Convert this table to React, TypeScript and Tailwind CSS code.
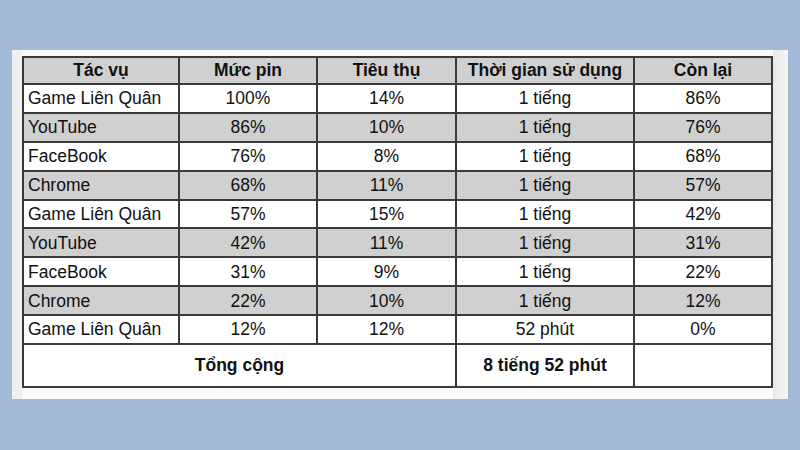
import React from "react";

const rows: string[][] = [
  ["Game Liên Quân", "100%", "14%", "1 tiếng", "86%"],
  ["YouTube", "86%", "10%", "1 tiếng", "76%"],
  ["FaceBook", "76%", "8%", "1 tiếng", "68%"],
  ["Chrome", "68%", "11%", "1 tiếng", "57%"],
  ["Game Liên Quân", "57%", "15%", "1 tiếng", "42%"],
  ["YouTube", "42%", "11%", "1 tiếng", "31%"],
  ["FaceBook", "31%", "9%", "1 tiếng", "22%"],
  ["Chrome", "22%", "10%", "1 tiếng", "12%"],
  ["Game Liên Quân", "12%", "12%", "52 phút", "0%"],
];

const headers = ["Tác vụ", "Mức pin", "Tiêu thụ", "Thời gian sử dụng", "Còn lại"];

export default function App() {
  return (
    <div
      className="w-[800px] h-[450px] bg-[#a3bbd8] pt-[50px] pl-[12px]"
      style={{ fontFamily: '"Liberation Sans", Arial, sans-serif' }}
    >
      <div className="w-[776px] h-[349px] bg-[#fbfbfb] flex">
        <div className="w-[10px] h-full bg-[#f0f0f0]" />
        <div className="w-[751px] pt-[6px]">
          <div className="grid grid-cols-[154px_136px_137px_176px_136px] grid-rows-[25px_repeat(9,26.9px)_41px] gap-[2px] p-[2px] bg-[#3a3a3a] text-[17.5px] text-[#111]">
            {headers.map((h) => (
              <div key={h} className="bg-[#d0d0d0] flex items-center justify-center font-bold">
                {h}
              </div>
            ))}
            {rows.map((r, i) =>
              r.map((c, j) => (
                <div
                  key={i + "-" + j}
                  className={
                    (i % 2 === 1 ? "bg-[#d0d0d0] " : "bg-white ") +
                    (j === 0 ? "flex items-center justify-start pl-[4px]" : "flex items-center justify-center")
                  }
                >
                  {c}
                </div>
              ))
            )}
            <div className="col-span-3 bg-white flex items-center justify-center font-bold">Tổng cộng</div>
            <div className="bg-white flex items-center justify-center font-bold">8 tiếng 52 phút</div>
            <div className="bg-white" />
          </div>
        </div>
        <div className="flex-1 h-full bg-gradient-to-r from-[#e8e8e8] to-[#f6f6f6]" />
      </div>
    </div>
  );
}
